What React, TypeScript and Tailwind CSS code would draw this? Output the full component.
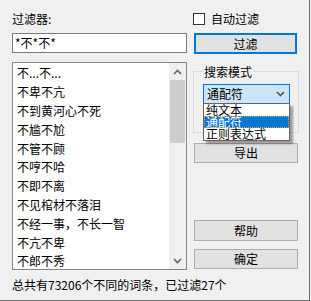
import React from 'react';

const words = [
  '不...不...',
  '不卑不亢',
  '不到黄河心不死',
  '不尴不尬',
  '不管不顾',
  '不哼不哈',
  '不即不离',
  '不见棺材不落泪',
  '不经一事，不长一智',
  '不亢不卑',
  '不郎不秀',
];

const modes = ['纯文本', '通配符', '正则表达式'];

const Chevron = ({ up = false, className = '' }: { up?: boolean; className?: string }) => (
  <svg width="9" height="6" viewBox="0 0 9 6" className={className}>
    <path
      d={up ? 'M1 5 L4.5 1.5 L8 5' : 'M1 1 L4.5 4.5 L8 1'}
      fill="none"
      stroke="currentColor"
      strokeWidth="1.6"
    />
  </svg>
);

const Button = ({ label, className = '' }: { label: string; className?: string }) => (
  <div
    className={
      'flex items-center justify-center bg-[#e1e1e1] border border-[#adadad] text-black ' + className
    }
  >
    {label}
  </div>
);

export default function App() {
  return (
    <div
      className="w-[311px] h-[301px] bg-[#f0f0f0] text-[12px] leading-[14px] text-black overflow-hidden"
      style={{ fontFamily: '"Noto Sans CJK SC", "Liberation Sans", sans-serif' }}
    >
      <div className="w-[310px] h-[301px] border-r border-b border-[#6e6e6e] flex flex-col">
        <div className="flex">
          {/* left column */}
          <div className="ml-[12px] w-[175px] flex flex-col">
            <div className="mt-[12px] h-[14px]">过滤器:</div>
            <div className="mt-[7px] h-[20px] bg-white border border-[#7a7a7a] flex items-center px-[2px]">
              *不*不*
            </div>
            <div className="mt-[9px] h-[208px] bg-white border border-[#828790] flex">
              <div className="flex-1 pt-[1px] pl-[4px] overflow-hidden">
                {words.map((w) => (
                  <div key={w} className="h-[18.8px] flex items-center whitespace-nowrap">
                    {w}
                  </div>
                ))}
              </div>
              <div className="w-[17px] bg-[#f0f0f0] flex flex-col items-center">
                <div className="h-[17px] flex items-center justify-center text-[#606060]">
                  <Chevron up />
                </div>
                <div className="w-[15px] h-[63px] bg-[#cdcdcd]" />
                <div className="flex-1" />
                <div className="h-[17px] flex items-center justify-center text-[#606060]">
                  <Chevron />
                </div>
              </div>
            </div>
          </div>

          {/* right column */}
          <div className="ml-[6px] w-[106px] flex flex-col">
            <div className="mt-[13px] h-[12px] flex items-center">
              <div className="w-[12px] h-[12px] border border-[#333333] bg-white" />
              <span className="ml-[6px]">自动过滤</span>
            </div>
            <div className="mt-[8px] ml-[1px] w-[103px] h-[21px] flex items-center justify-center bg-[#e1e1e1] border-2 border-[#0078d7]">
              过滤
            </div>
            <div className="relative mt-[17px] h-[62px] border border-[#dcdcdc]">
              <span className="absolute left-[9px] top-[-7px] px-[1px] bg-[#f0f0f0]">搜索模式</span>
              <div className="absolute left-[9px] top-[12px] w-[87px] h-[20px] bg-[#cce4f7] border border-[#0078d7] flex items-center pl-[3px]">
                <span className="flex-1">通配符</span>
                <Chevron className="mr-[4px] text-[#555555]" />
              </div>
              <div className="absolute left-[9px] top-[31px] w-[87px] bg-white border border-[#646464] shadow-[3px_3px_2px_rgba(0,0,0,0.35)] z-10 leading-[12px]">
                {modes.map((m) => (
                  <div
                    key={m}
                    className={
                      m === '通配符'
                        ? 'h-[12px] flex items-center pl-[2px] bg-[#0078d7] text-white outline outline-1 outline-dotted outline-[#f0a030] -outline-offset-1'
                        : 'h-[12px] flex items-center pl-[2px]'
                    }
                  >
                    {m}
                  </div>
                ))}
              </div>
            </div>
            <Button label="导出" className="mt-[10px] ml-[1px] w-[104px] h-[20px]" />
            <Button label="帮助" className="mt-[57px] ml-[1px] w-[104px] h-[21px]" />
            <Button label="确定" className="mt-[8px] ml-[1px] w-[104px] h-[20px]" />
          </div>
        </div>
        <div className="mt-[8px] ml-[12px] h-[14px] whitespace-nowrap">总共有73206个不同的词条，已过滤27个</div>
      </div>
    </div>
  );
}
